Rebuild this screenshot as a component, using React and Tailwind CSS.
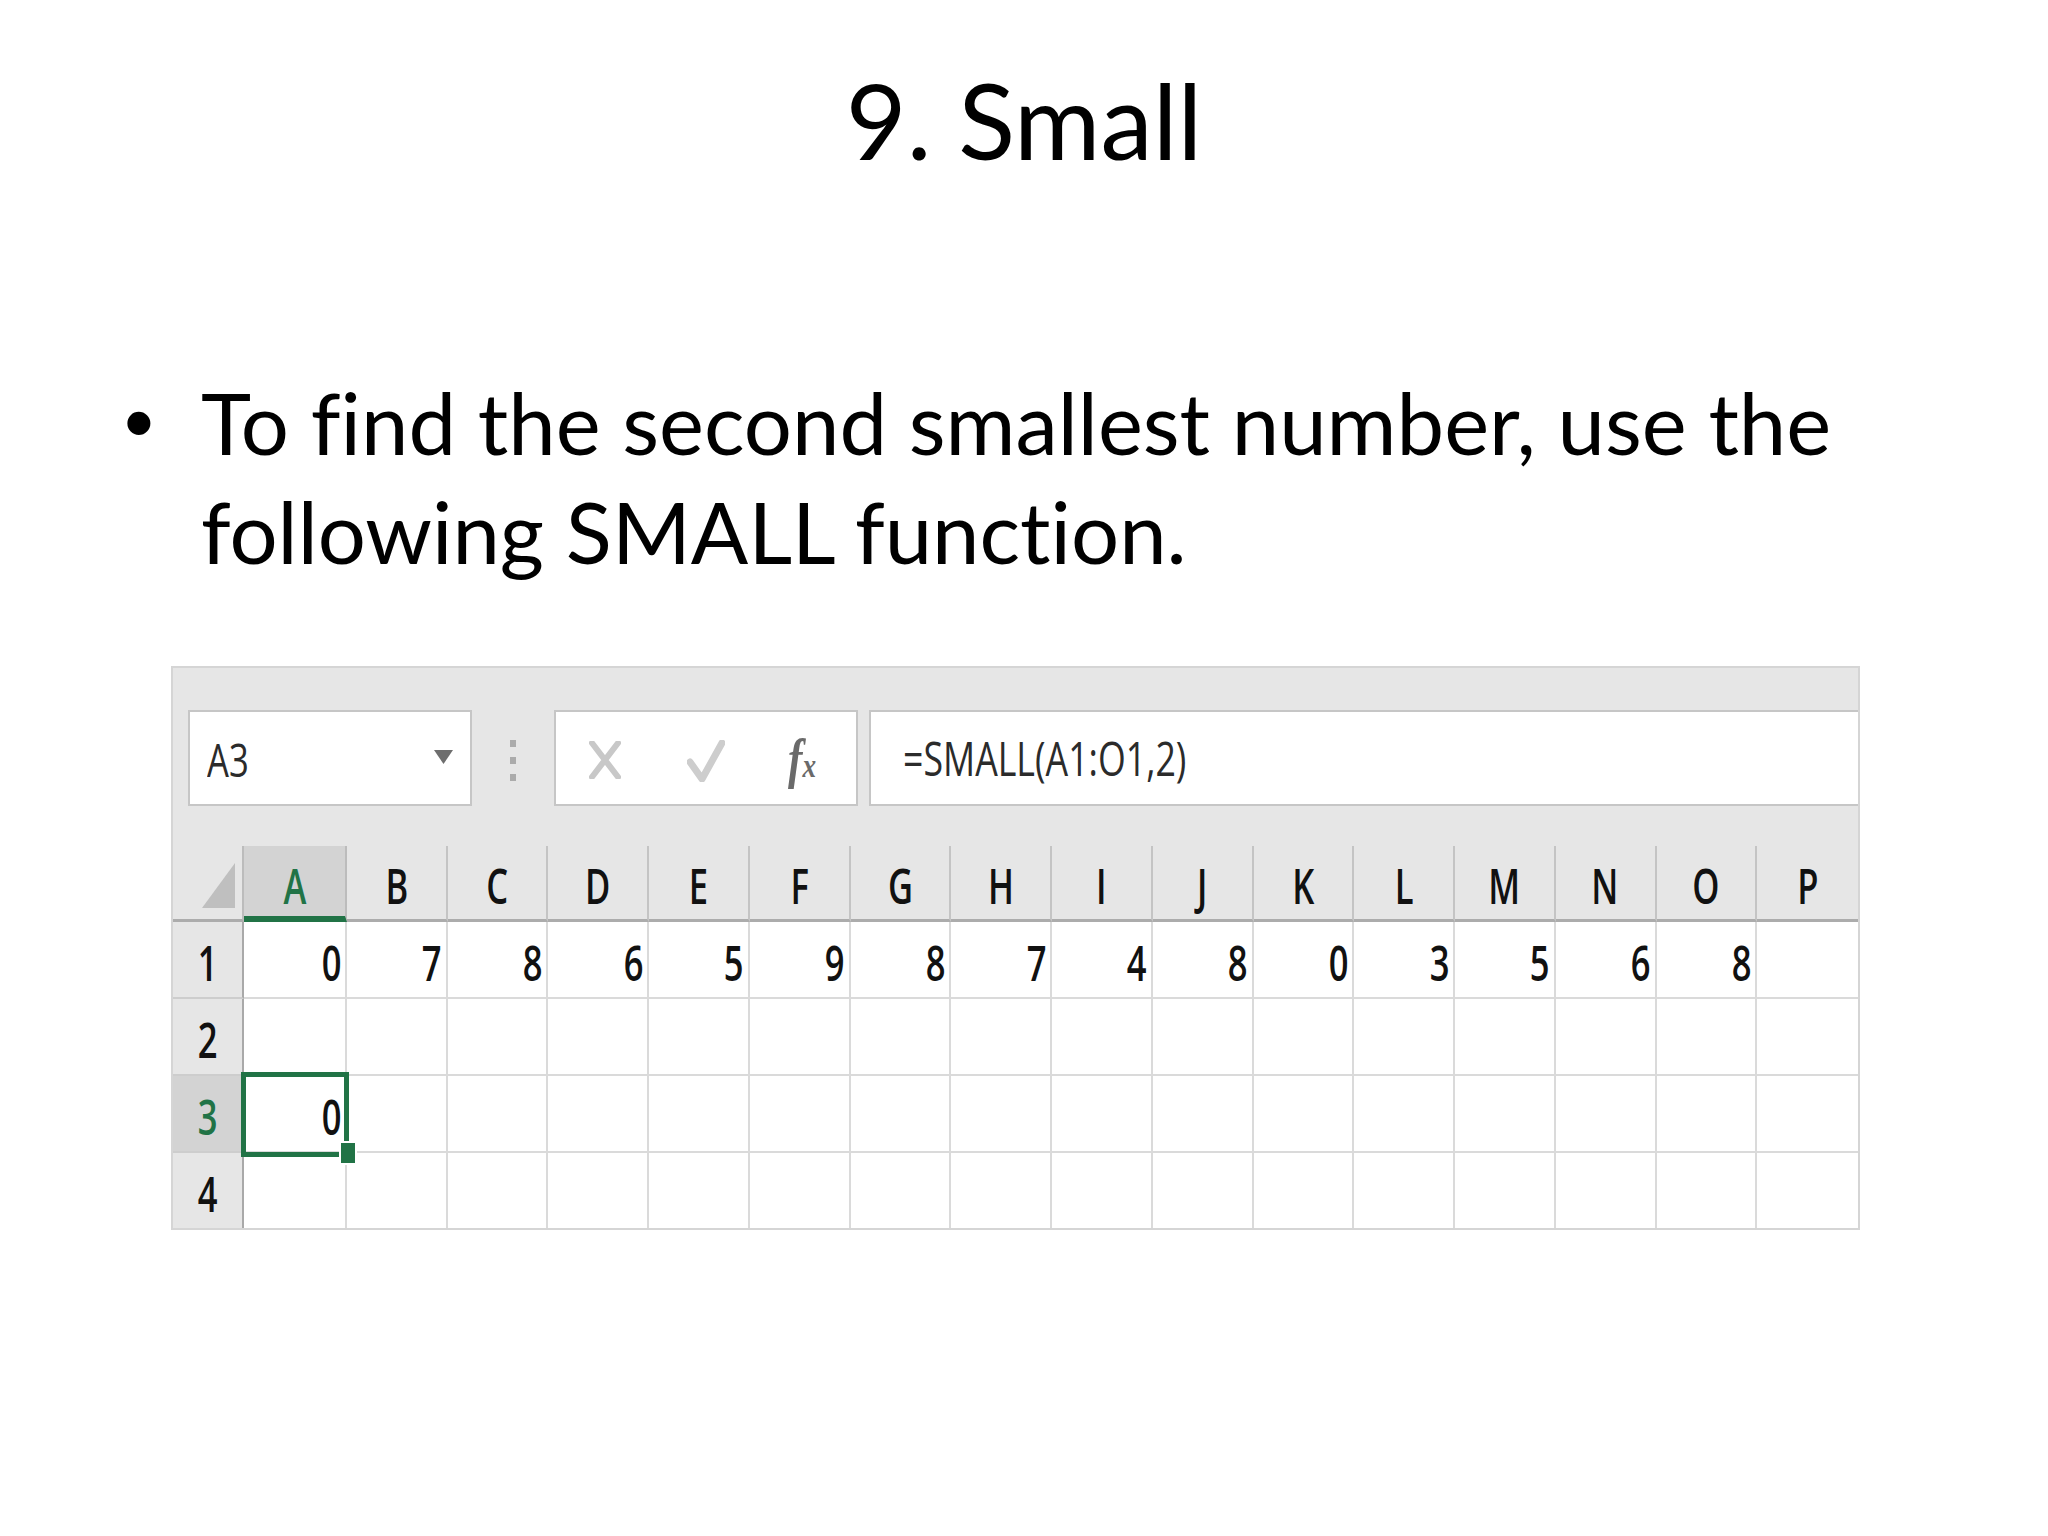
const COLS = ['A', 'B', 'C', 'D', 'E', 'F', 'G', 'H', 'I', 'J', 'K', 'L', 'M', 'N', 'O', 'P'];
const ROW1 = ['0', '7', '8', '6', '5', '9', '8', '7', '4', '8', '0', '3', '5', '6', '8', ''];
const ROWS = [
  ROW1,
  COLS.map(() => ''),
  ['0', '', '', '', '', '', '', '', '', '', '', '', '', '', '', ''],
  COLS.map(() => ''),
];

function XText({ children, className = '' }) {
  return (
    <span className={`inline-block font-['Open_Sans',sans-serif] text-[48px] font-semibold leading-none ${className}`}>
      {children}
    </span>
  );
}

function Toolbar() {
  return (
    <div className="flex h-[178px] items-start pt-[42px] pl-[15px]">
      <div className="flex h-[96px] w-[284px] items-center justify-between border-2 border-[#c6c6c6] bg-white pl-[17px] pr-[17px] pt-[3px]">
        <span className="inline-block origin-left scale-x-[0.77] font-['Open_Sans',sans-serif] text-[45px] font-medium leading-none text-[#2b2b2b]">
          A3
        </span>
        <svg width="19" height="14" viewBox="0 0 19 14" className="mb-[6px]">
          <polygon points="0,0 19,0 9.5,14" fill="#6e6e6e" />
        </svg>
      </div>
      <div className="ml-[38px] mr-[38px] flex h-[96px] flex-col items-center justify-center gap-[10px] pt-[4px]">
        <div className="h-[7px] w-[6px] bg-[#ababab]" />
        <div className="h-[7px] w-[6px] bg-[#ababab]" />
        <div className="h-[7px] w-[6px] bg-[#ababab]" />
      </div>
      <div className="flex h-[96px] w-[304px] items-center border-2 border-[#c6c6c6] bg-white pl-[33px]">
        <svg width="32" height="38" viewBox="0 0 32 38" className="mt-[4px]">
          <path d="M3 2 L29 36 M29 2 L3 36" stroke="#c8c8c8" strokeWidth="6" strokeLinecap="round" fill="none" />
        </svg>
        <svg width="38" height="42" viewBox="0 0 38 42" className="ml-[66px] mt-[6px]">
          <path d="M3 22 L15 39 L35 3" stroke="#cdcdcd" strokeWidth="7" strokeLinecap="round" strokeLinejoin="round" fill="none" />
        </svg>
        <span className="ml-[63px] mt-[2px] inline-block origin-left scale-x-[0.8] font-['Liberation_Serif',serif] text-[54px] font-bold italic leading-none text-[#6a6a6a]">
          f<span className="text-[34px]">x</span>
        </span>
      </div>
      <div className="ml-[11px] flex h-[96px] flex-1 items-center border-y-2 border-l-2 border-[#c6c6c6] bg-white pl-[32px]">
        <span className="inline-block origin-left scale-x-[0.76] font-['Open_Sans',sans-serif] text-[47px] font-medium leading-none text-[#2b2b2b]">
          =SMALL(A1:O1,2)
        </span>
      </div>
    </div>
  );
}

function HeaderRow() {
  return (
    <>
      <div className="flex items-end justify-end border-r-2 border-b-[3px] border-r-[#bcbcbc] border-b-[#acacac] bg-[#e6e6e6] pr-[7px] pb-[11px]">
        <svg width="33" height="45" viewBox="0 0 33 45">
          <polygon points="33,0 33,45 0,45" fill="#bfbfbf" />
        </svg>
      </div>
      {COLS.map((c, i) => {
        const isA = i === 0;
        const isLast = i === COLS.length - 1;
        return (
          <div
            key={c}
            className={`flex justify-center pt-[16px] ${
              isA
                ? 'border-b-[6px] border-r-2 border-b-[#217346] border-r-[#bcbcbc] bg-[#d3d3d3]'
                : isLast
                ? 'border-b-[3px] border-b-[#acacac] bg-[#e6e6e6]'
                : 'border-b-[3px] border-r-2 border-b-[#acacac] border-r-[#c4c4c4] bg-[#e6e6e6]'
            }`}
          >
            <XText className={`origin-center scale-x-[0.72] ${isA ? 'text-[#217346]' : 'text-[#111111]'}`}>{c}</XText>
          </div>
        );
      })}
    </>
  );
}

function DataRow({ index, values }) {
  const lastRow = index === 3;
  const selectedRow = index === 2;
  return (
    <>
      <div
        className={`flex justify-center pt-[17px] border-r-2 border-r-[#a9a9a9] ${
          lastRow ? '' : 'border-b-2 border-b-[#cdcdcd]'
        } ${selectedRow ? 'bg-[#d3d3d3]' : 'bg-[#e6e6e6]'}`}
      >
        <XText className={`origin-center scale-x-[0.72] ${selectedRow ? 'text-[#217346]' : 'text-[#111111]'}`}>
          {index + 1}
        </XText>
      </div>
      {values.map((v, i) => {
        const lastCol = i === values.length - 1;
        const isSel = selectedRow && i === 0;
        return (
          <div
            key={i}
            className={`relative flex justify-end bg-white pt-[17px] pr-[4px] border-[#dadada] ${
              lastCol ? '' : 'border-r-2'
            } ${lastRow ? '' : 'border-b-2'}`}
          >
            {v !== '' && <XText className="origin-right scale-x-[0.72] text-[#111111]">{v}</XText>}
            {isSel && (
              <>
                <div className="absolute -left-[3px] -top-[4px] z-10 h-[85px] w-[108px] border-[5px] border-[#217346]" />
                <div className="absolute left-[95px] top-[65px] z-20 h-[24px] w-[18px] border-2 border-white bg-[#217346]" />
              </>
            )}
          </div>
        );
      })}
    </>
  );
}

export default function App() {
  return (
    <div className="h-[1536px] w-[2048px] overflow-hidden bg-white text-black">
      <h1 className="pt-[56px] text-center font-['Lato',sans-serif] text-[105px] font-normal leading-[126px] [font-variant-ligatures:none]">
        9. Small
      </h1>
      <div className="mt-[186px] flex pl-[124px] font-['Lato',sans-serif] text-[85px] leading-[109px] [font-variant-ligatures:none]">
        <span className="w-[77px] shrink-0 font-['Liberation_Sans',sans-serif]">•</span>
        <div>
          <div>To find the second smallest number, use the</div>
          <div>following SMALL function.</div>
        </div>
      </div>
      <div className="ml-[171px] mt-[80px] flex h-[564px] w-[1689px] flex-col border-2 border-[#d5d5d5] bg-[#e6e6e6]">
        <Toolbar />
        <div className="grid flex-1 grid-cols-[71px_103px_repeat(15,minmax(0,1fr))] grid-rows-[76px_77px_77px_77px_75px]">
          <HeaderRow />
          {ROWS.map((r, i) => (
            <DataRow key={i} index={i} values={r} />
          ))}
        </div>
      </div>
    </div>
  );
}
